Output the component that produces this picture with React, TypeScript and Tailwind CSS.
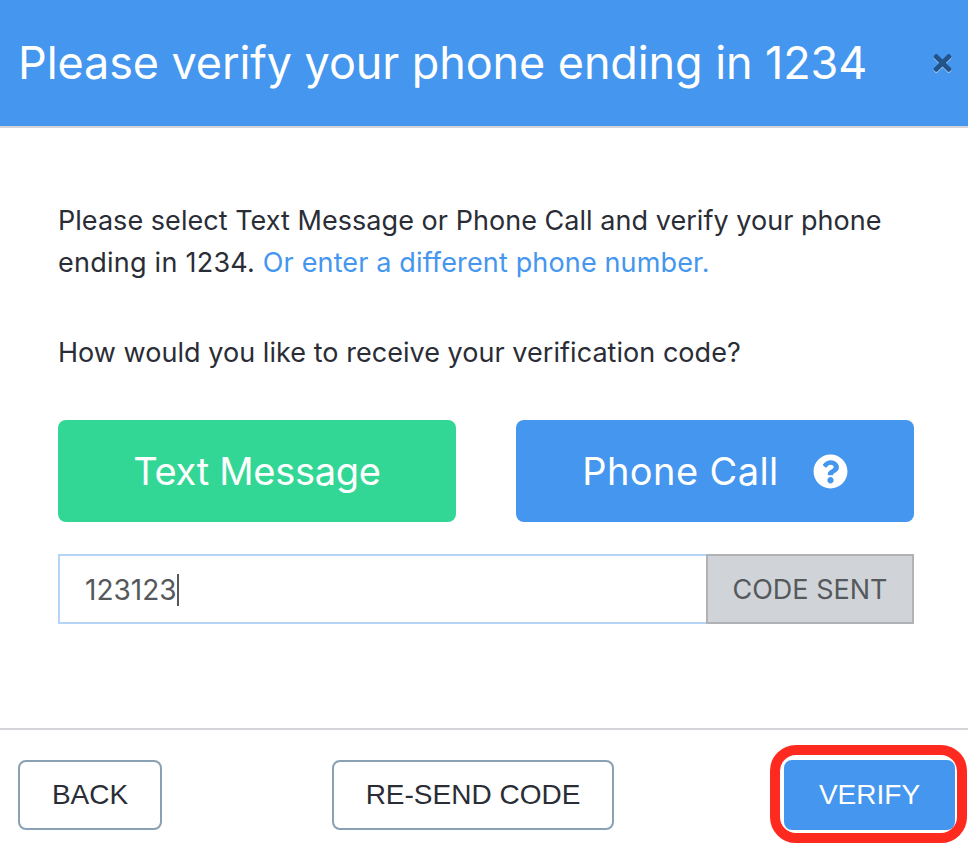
import { FaQuestionCircle, FaTimes } from "react-icons/fa";

export default function App() {
  return (
    <div className="relative w-[968px] h-[844px] overflow-hidden bg-white font-['Inter',sans-serif] text-[#2a2d36]">
      <header className="h-[128px] bg-[#4496ee] border-b-2 border-[#d3d5d8] flex items-center justify-between pl-[18px] pr-[14px]">
        <h1 className="text-[45px] tracking-[-0.1px] leading-[122px] text-white font-normal whitespace-nowrap">Please verify your phone ending in 1234</h1>
        <FaTimes className="w-[23px] h-[26px] text-[#22548a] [filter:drop-shadow(0_1px_0_#a9cdf5)]" />
      </header>
      <main className="h-[600px] pl-[58px] pr-[54px] pt-[72px]">
        <p className="text-[27px] tracking-[0.04px] leading-[42px] w-[840px]">
          Please select Text Message or Phone Call and verify your phone <span className="tracking-[0.25px]">ending in 1234.</span> <span className="text-[#4496ee] tracking-[0.15px]">Or enter a different phone number.</span>
        </p>
        <p className="mt-[48px] text-[27px] tracking-[0.04px] leading-[42px]">How would you like to receive your verification code?</p>
        <div className="mt-[46px] flex justify-between">
          <button className="w-[398px] h-[102px] rounded-[8px] bg-[#33d795] text-white text-[38px] tracking-[-0.3px]">Text Message</button>
          <button className="w-[398px] h-[102px] rounded-[8px] bg-[#4496ee] text-white text-[38px] tracking-[0.4px] flex items-center justify-center gap-[34px]">
            Phone Call
            <FaQuestionCircle className="w-[35px] h-[35px]" />
          </button>
        </div>
        <div className="mt-[32px] flex h-[70px]">
          <div className="flex-1 border-2 border-r-0 border-[#b5d5f6] flex items-center pl-[25px] pt-[1px] text-[28px] text-[#55595c]">
            123123<span className="w-[2px] h-[32px] bg-[#55595c]"></span>
          </div>
          <div className="w-[208px] bg-[#d0d4d8] border-2 border-[#b0b2b6] flex items-center justify-center pt-[3px] text-[27px] text-[#55595c]">CODE SENT</div>
        </div>
      </main>
      <footer className="h-[116px] border-t-2 border-[#d3d5d8] flex justify-between items-start pt-[30px] pl-[18px] pr-[13px] font-['Liberation_Sans',sans-serif]">
        <button className="w-[144px] h-[70px] rounded-[8px] border-2 border-[#8aa0b4] text-[28px] text-[#2a2d36]">BACK</button>
        <button className="w-[282px] h-[70px] rounded-[8px] border-2 border-[#8aa0b4] text-[28px] text-[#2a2d36]">RE-SEND CODE</button>
        <button className="w-[171px] h-[70px] rounded-[8px] bg-[#4496ee] text-[28px] text-white">VERIFY</button>
      </footer>
      <div className="absolute left-[770px] top-[745px] w-[197px] h-[98px] rounded-[26px] border-[10px] border-[#ff2a1f] pointer-events-none"></div>
    </div>
  );
}
